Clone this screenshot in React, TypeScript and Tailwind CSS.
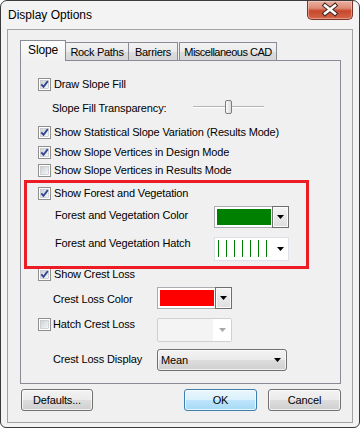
import React, { useId } from "react";

function Arrow({ color = "#000" }: { color?: string }) {
  return (
    <svg width="7" height="4" viewBox="0 0 7 4" className="block">
      <polygon points="0,0 7,0 3.5,4" fill={color} />
    </svg>
  );
}

function Check({ checked }: { checked: boolean }) {
  const raw = useId();
  const id = "cb" + raw.replace(/[^a-zA-Z0-9]/g, "");
  return (
    <svg width="13" height="13" viewBox="0 0 13 13" className="block shrink-0">
      <defs>
        <linearGradient id={id} x1="0" y1="0" x2="1" y2="1">
          <stop offset="0" stopColor="#cbcfd5" />
          <stop offset="1" stopColor="#f7f7f7" />
        </linearGradient>
      </defs>
      <rect x="0.5" y="0.5" width="12" height="12" fill="#ffffff" stroke="#8f8f8f" />
      <rect x="2.5" y="2.5" width="8" height="8" fill={`url(#${id})`} stroke="#b9bcc2" strokeWidth="0.6" />
      {checked && (
        <path d="M3.3 6.3 L5.5 8.9 L9.8 3.1" fill="none" stroke="#31478f" strokeWidth="1.8" strokeLinejoin="miter" />
      )}
    </svg>
  );
}

function CheckRow({ checked, label, className }: { checked: boolean; label: string; className: string }) {
  return (
    <div className={"flex h-[16px] items-center " + className}>
      <Check checked={checked} />
      <span className="ml-[3px] whitespace-nowrap">{label}</span>
    </div>
  );
}

function ColorCombo({ swatch }: { swatch: "green" | "red" }) {
  return (
    <div className="flex h-[22px] w-[75px] shrink-0">
      <div className="flex-1 border-y border-l border-[#abadb3] bg-white py-[2px] pl-[2px] pr-[1px]">
        <div className={swatch === "green" ? "h-full bg-[#008000]" : "h-full bg-[#ff0000]"} />
      </div>
      <div className="flex h-full w-[17px] items-center justify-center border border-[#6e6e6e] bg-[linear-gradient(#f4f4f4,#dedede)] shadow-[inset_0_0_0_1px_#fbfbfb]">
        <Arrow />
      </div>
    </div>
  );
}

function HatchCombo() {
  const xs = [0, 1, 2, 3, 4, 5, 6];
  return (
    <div className="flex h-[24px] w-[75px] shrink-0 items-center border border-[#dde2e8] bg-white">
      <svg width="58" height="22" viewBox="0 0 58 22" className="block">
        {xs.map((i) => (
          <line key={i} x1={3.5 + i * 8} y1="2" x2={3.5 + i * 8} y2="19" stroke="#008000" strokeWidth="1" />
        ))}
      </svg>
      <div className="ml-auto mr-[4px]">
        <Arrow />
      </div>
    </div>
  );
}

function DisabledCombo() {
  return (
    <div className="flex h-[24px] w-[75px] shrink-0 rounded-[2px] border border-[#d0d0d0] bg-[#f4f4f4]">
      <div className="flex-1" />
      <div className="flex w-[18px] items-center justify-center bg-white">
        <Arrow color="#a8a8a8" />
      </div>
    </div>
  );
}

function MeanCombo() {
  return (
    <div className="flex h-[22px] w-[130px] shrink-0 items-center rounded-[3px] border border-[#707070] bg-[linear-gradient(#f2f2f2_0%,#ebebeb_50%,#dddddd_50%,#cfcfcf_100%)] pl-[3px] pr-[5px] shadow-[inset_0_0_0_1px_rgba(255,255,255,0.7)]">
      <span>Mean</span>
      <span className="ml-auto">
        <Arrow />
      </span>
    </div>
  );
}

function Btn({ children, def, w }: { children: React.ReactNode; def?: boolean; w: string }) {
  const base =
    "flex h-[22px] items-center justify-center rounded-[3px] border shadow-[inset_0_0_0_1px_rgba(255,255,255,0.75)] " + w + " ";
  return (
    <div
      className={
        base +
        (def
          ? "border-[#3c7fb1] bg-[linear-gradient(#eaf6fd_0%,#d9f0fc_50%,#bee6fd_50%,#a7d9f5_100%)]"
          : "border-[#707070] bg-[linear-gradient(#f2f2f2_0%,#ebebeb_50%,#dddddd_50%,#cfcfcf_100%)]")
      }
    >
      {children}
    </div>
  );
}

export default function App() {
  return (
    <div className="h-[428px] w-[360px] font-['Liberation_Sans',Arial,sans-serif] text-[11px] leading-[16px] tracking-[-0.15px] text-black">
      <div className="flex h-[428px] w-[360px] flex-col rounded-t-[7px] rounded-b-[6px] border border-[#3a3a3a] bg-[#f3f3f3]">
        {/* title bar */}
        <div className="flex h-[28px] shrink-0 items-start justify-between pr-[6px]">
          <div className="pl-[7px] pt-[6px] text-[12px] tracking-[0px]">Display Options</div>
          <div className="h-[19px] w-[46px] rounded-b-[5px] border border-t-0 border-[#7b3426] bg-[linear-gradient(#eab0a2_0%,#dc8a74_40%,#c7472c_55%,#d3664a_100%)] shadow-[inset_0_0_0_1px_rgba(255,220,210,0.45)]">
            <svg width="44" height="18" viewBox="0 0 44 18" className="block">
              <path d="M17 4.5 L27 12.5 M27 4.5 L17 12.5" stroke="#3e2620" strokeWidth="4.6" strokeLinecap="square" />
              <path d="M17 4.5 L27 12.5 M27 4.5 L17 12.5" stroke="#ffffff" strokeWidth="2.6" strokeLinecap="square" />
            </svg>
          </div>
        </div>
        {/* client area */}
        <div className="mx-[6px] flex h-[394px] shrink-0 flex-col border border-[#a2a2a2] bg-[#f0f0f0] pt-[10px]">
          {/* tabs */}
          <div className="flex h-[20px] items-end pl-[12px]">
            <div className="relative z-10 -mb-px h-[21px] w-[46px] border border-b-0 border-[#898c95] bg-[linear-gradient(#fdfdfd,#f0f0f0)] pl-[7px] pt-[1px] text-[12px] tracking-[-0.1px]">
              Slope
            </div>
            <div className="-ml-px flex h-[18px] w-[64px] justify-center border border-b-0 border-[#898c95] bg-[linear-gradient(#f3f3f3_0%,#ebebeb_50%,#dddddd_50%,#d6d6d6_100%)] pt-[1px] tracking-[-0.3px]">
              Rock Paths
            </div>
            <div className="flex h-[18px] w-[49px] justify-center border border-b-0 border-l-0 border-[#898c95] bg-[linear-gradient(#f3f3f3_0%,#ebebeb_50%,#dddddd_50%,#d6d6d6_100%)] pt-[1px] tracking-[-0.3px]">
              Barriers
            </div>
            <div className="ml-px flex h-[18px] w-[98px] justify-center border border-b-0 border-[#898c95] bg-[linear-gradient(#f3f3f3_0%,#ebebeb_50%,#dddddd_50%,#d6d6d6_100%)] pt-[1px] tracking-[-0.5px]">
              Miscellaneous CAD
            </div>
          </div>
          {/* panel */}
          <div className="relative ml-[12px] mr-[11px] h-[324px] border border-[#898c95] bg-[#f0f0f0]">
            <div className="flex flex-col pl-[17px]">
              <CheckRow className="mt-[15px]" checked label="Draw Slope Fill" />
              <div className="mt-[8px] flex h-[16px] items-start">
                <span className="ml-[14px] w-[141px] whitespace-nowrap">Slope Fill Transparency:</span>
                <div className="relative h-[13px] w-[71px]">
                  <div className="absolute left-0 right-0 top-[6px] h-[2px] border-t border-b border-t-[#b4b4b4] border-b-[#ffffff]" />
                  <div className="absolute left-[32px] top-0 h-[14px] w-[7px] rounded-[2px] border border-[#7d7d7d] bg-[linear-gradient(90deg,#fafafa,#dcdcdc)]" />
                </div>
              </div>
              <CheckRow className="mt-[8px]" checked label="Show Statistical Slope Variation (Results Mode)" />
              <CheckRow className="mt-[4px]" checked label="Show Slope Vertices in Design Mode" />
              <CheckRow className="mt-[2px]" checked={false} label="Show Slope Vertices in Results Mode" />
              <CheckRow className="mt-[7px]" checked label="Show Forest and Vegetation" />
              <div className="mt-[5px] flex h-[22px] items-start">
                <span className="ml-[17px] mt-[1px] w-[159px] whitespace-nowrap">Forest and Vegetation Color</span>
                <ColorCombo swatch="green" />
              </div>
              <div className="mt-[9px] flex h-[24px] items-start">
                <span className="-mt-[2px] ml-[17px] w-[159px] whitespace-nowrap">Forest and Vegetation Hatch</span>
                <HatchCombo />
              </div>
              <CheckRow className="mt-[5px]" checked label="Show Crest Loss" />
              <div className="mt-[5px] flex h-[22px] items-start">
                <span className="ml-[15px] mt-[4px] w-[104px] whitespace-nowrap">Crest Loss Color</span>
                <ColorCombo swatch="red" />
              </div>
              <div className="mt-[9px] flex h-[24px] items-start">
                <div className="-mt-[2px] flex h-[16px] w-[119px] items-center">
                  <Check checked={false} />
                  <span className="ml-[2px] whitespace-nowrap">Hatch Crest Loss</span>
                </div>
                <DisabledCombo />
              </div>
              <div className="mt-[7px] flex h-[22px] items-start">
                <span className="ml-[15px] mt-[2px] w-[104px] whitespace-nowrap">Crest Loss Display</span>
                <MeanCombo />
              </div>
            </div>
            {/* red annotation box */}
            <div className="pointer-events-none absolute left-[3px] top-[119px] h-[89px] w-[285px] border-[3px] border-[#ed1c24]" />
          </div>
          {/* buttons */}
          <div className="mt-[5px] flex pl-[13px] pr-[11px]">
            <Btn w="w-[72px]">Defaults...</Btn>
            <div className="flex-1" />
            <Btn w="w-[73px]" def>
              OK
            </Btn>
            <div className="ml-[11px]">
              <Btn w="w-[73px]">Cancel</Btn>
            </div>
          </div>
        </div>
      </div>
    </div>
  );
}
